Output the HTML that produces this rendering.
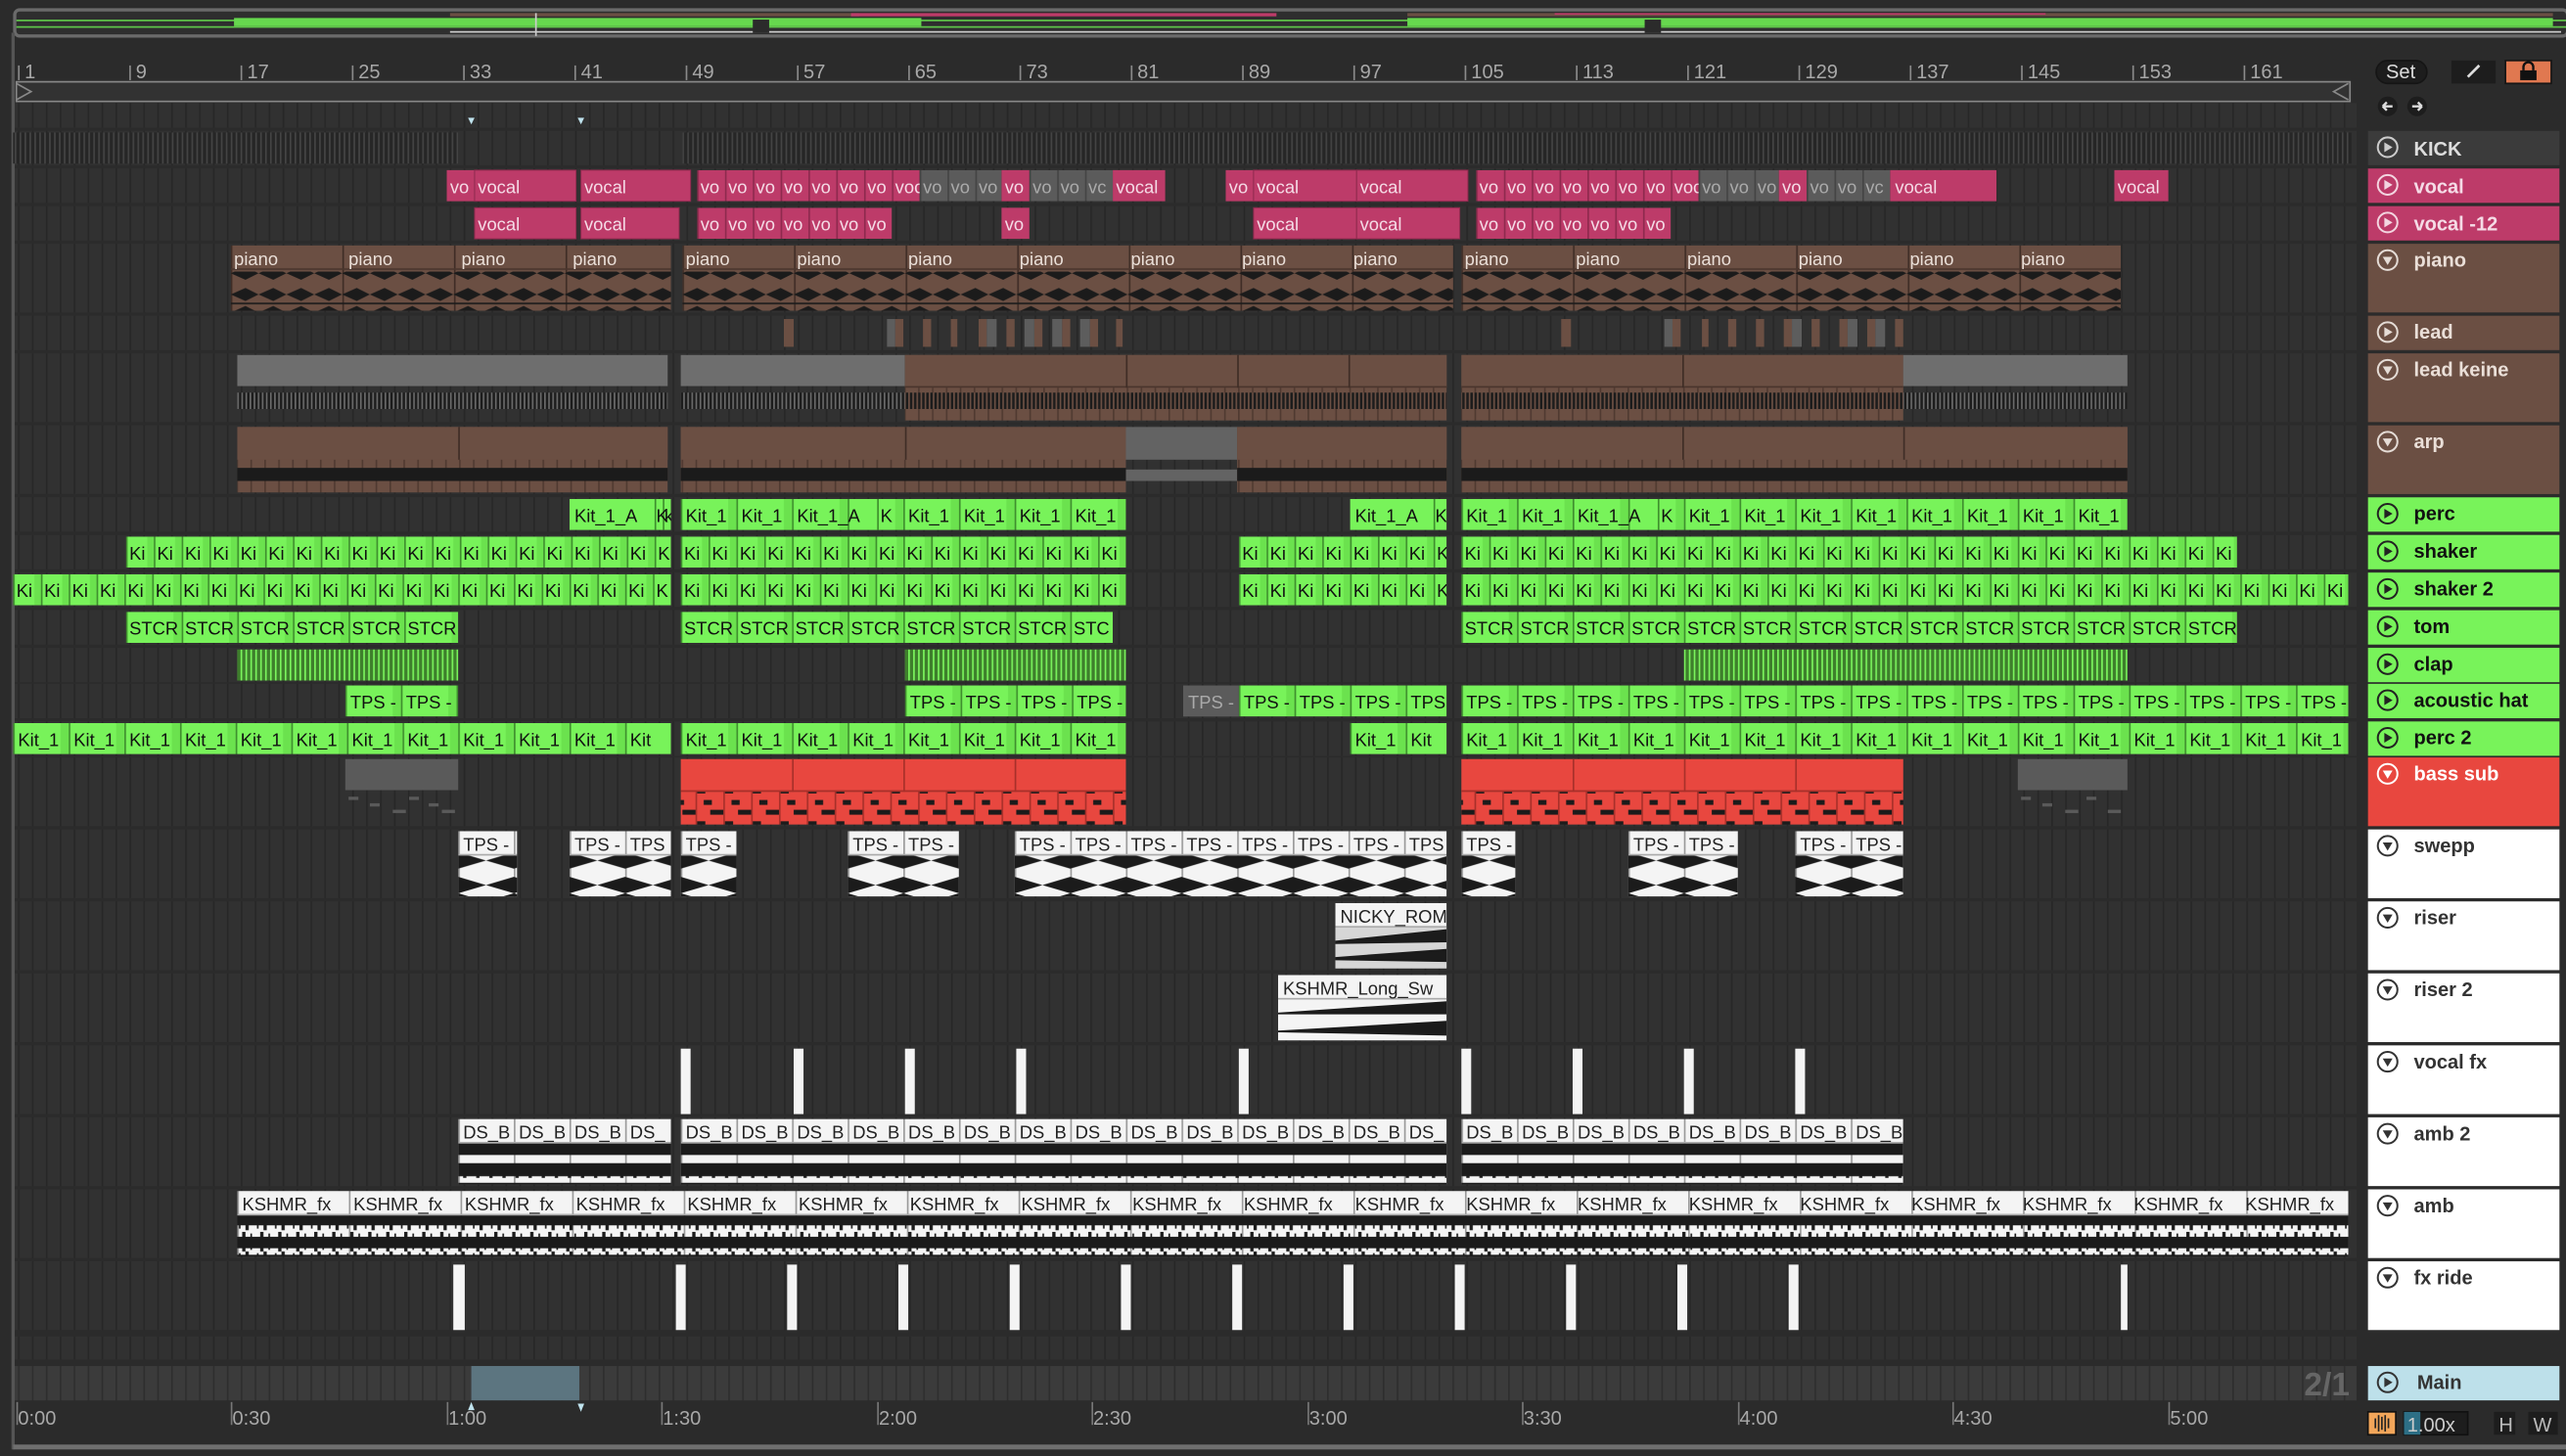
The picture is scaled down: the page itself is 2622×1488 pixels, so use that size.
<!DOCTYPE html>
<html><head><meta charset="utf-8">
<style>
html,body{margin:0;padding:0;background:#2a2a2a;width:2622px;height:1488px;overflow:hidden}
svg{display:block}
text{font-family:"Liberation Sans",sans-serif}
.cl{font-size:11px;fill:#111}
.pk{font-size:11px;fill:#f5dbe6}
.wt{font-size:11px;fill:#222}
.br{font-size:11px;fill:#eadfd8}
.hd{font-size:12px;font-weight:bold}
.rl{font-size:12px;fill:#a8a8a8}
</style></head><body>
<svg width="2622" height="1488" viewBox="0 0 1568 890" preserveAspectRatio="none" xmlns="http://www.w3.org/2000/svg">
<defs>
<pattern id="grid" x="11" y="0" width="8.51" height="10" patternUnits="userSpaceOnUse"><rect width="8.51" height="10" fill="#313131"/><rect width="1" height="10" fill="#272727"/></pattern>
<pattern id="gridM" x="11" y="0" width="8.51" height="10" patternUnits="userSpaceOnUse"><rect width="8.51" height="10" fill="#3b3b3b"/><rect width="1" height="10" fill="#2e2e2e"/></pattern>
<pattern id="g17" width="17" height="19" patternUnits="userSpaceOnUse"><rect width="17" height="19" fill="#78f35a"/><rect x="13" width="4" height="19" fill="#6be24e"/><rect width="1" height="19" fill="#3f8f2e"/></pattern>
<pattern id="g34" width="34" height="19" patternUnits="userSpaceOnUse"><rect width="34" height="19" fill="#78f35a"/><rect x="29" width="5" height="19" fill="#6be24e"/><rect width="1" height="19" fill="#3f8f2e"/></pattern>
<pattern id="gst" width="3" height="19" patternUnits="userSpaceOnUse"><rect width="3" height="19" fill="#3e7f2c"/><rect width="1" height="19" fill="#7af35c"/></pattern>
<pattern id="v17" width="17" height="19" patternUnits="userSpaceOnUse"><rect width="17" height="19" fill="#bd3b69"/><rect width="1" height="19" fill="#8e2a4e"/></pattern>
<pattern id="gr17" width="17" height="19" patternUnits="userSpaceOnUse"><rect width="17" height="19" fill="#5b5b5b"/><rect width="1" height="19" fill="#444"/></pattern>
<pattern id="pi68" width="68.2" height="40" patternUnits="userSpaceOnUse"><rect width="68.2" height="40" fill="#6b4f43"/><rect width="1" height="40" fill="#3f2d26"/><rect y="14" width="68.2" height="1" fill="#4a352d"/></pattern>
<pattern id="wv" width="17" height="24" patternUnits="userSpaceOnUse"><polygon points="0,6 9,2 17,6 9,10" fill="#1b1b1b"/><polygon points="0,17 9,13 17,17 9,21" fill="#1b1b1b"/><rect y="11" width="17" height="1" fill="#1b1b1b"/></pattern>
<pattern id="ks" width="3" height="20" patternUnits="userSpaceOnUse"><rect width="3" height="20" fill="#262626"/><rect width="1" height="20" fill="#444"/></pattern>
<pattern id="ks2" width="2.5" height="10" patternUnits="userSpaceOnUse"><rect width="2.5" height="10" fill="#1c1c1c"/><rect width="1" height="10" fill="#6a6a6a"/></pattern>
<pattern id="ks3" width="2.5" height="10" patternUnits="userSpaceOnUse"><rect width="2.5" height="10" fill="#1c1c1c"/><rect width="1" height="10" fill="#6b4f43"/></pattern>
<pattern id="w34" width="34" height="40" patternUnits="userSpaceOnUse"><rect width="34" height="40" fill="#f4f4f4"/><rect width="1" height="40" fill="#9a9a9a"/><rect y="14" width="34" height="1" fill="#aaa"/></pattern>
<pattern id="w68" width="68.2" height="40" patternUnits="userSpaceOnUse"><rect width="68.2" height="40" fill="#f4f4f4"/><rect width="1" height="40" fill="#9a9a9a"/><rect y="14" width="68.2" height="1" fill="#aaa"/></pattern>
<pattern id="bow" width="34" height="25" patternUnits="userSpaceOnUse"><polygon points="0,3 17,8 34,3 34,13 17,8 0,13" fill="#1b1b1b"/><polygon points="0,14 17,19 34,14 34,24 17,19 0,24" fill="#1b1b1b" opacity="0"/><polygon points="0,13 17,18 0,23" fill="#1b1b1b"/><polygon points="34,13 17,18 34,23" fill="#1b1b1b"/></pattern>
<pattern id="noise" width="11" height="25" patternUnits="userSpaceOnUse"><rect y="3" width="11" height="7" fill="#1b1b1b"/><rect x="3" y="0" width="2" height="12" fill="#1b1b1b"/><rect x="8" y="1" width="1" height="10" fill="#1b1b1b"/><rect y="14" width="11" height="7" fill="#1b1b1b"/><rect x="5" y="12" width="2" height="12" fill="#1b1b1b"/><rect x="1" y="13" width="1" height="10" fill="#1b1b1b"/></pattern>
<pattern id="noise2" width="8" height="25" patternUnits="userSpaceOnUse"><rect y="2" width="8" height="8" fill="#1b1b1b"/><rect y="14" width="8" height="8" fill="#1b1b1b"/><rect x="3" y="9" width="2" height="2" fill="#1b1b1b"/></pattern>
<pattern id="bass" width="17" height="20" patternUnits="userSpaceOnUse"><rect width="17" height="20" fill="#e8473f"/><rect width="1" height="20" fill="#a8302a"/><rect x="1" y="2" width="5" height="3" fill="#1b1b1b"/><rect x="5" y="9" width="5" height="3" fill="#1b1b1b"/><rect x="9" y="15" width="8" height="3" fill="#1b1b1b"/></pattern>
<pattern id="pb" width="8.5" height="20" patternUnits="userSpaceOnUse"><rect width="8.5" height="20" fill="#6b4f43"/><rect width="1" height="20" fill="#503a31"/></pattern>
</defs>

<rect width="1568" height="890" fill="#2b2b2b"/>
<rect x="9" y="6" width="1560" height="16" rx="3" fill="#2e2e2e" stroke="#6a6a6a" stroke-width="2"/>
<rect x="10" y="12" width="1558" height="1" fill="#5fc84a"/>
<rect x="10" y="16" width="1558" height="1" fill="#5fc84a"/>
<rect x="143" y="11" width="420" height="5" fill="#66d84e"/>
<rect x="275" y="8" width="250" height="2" fill="#6b4f43"/>
<rect x="520" y="8" width="260" height="2" fill="#bd3b69"/>
<rect x="860" y="11" width="700" height="5" fill="#66d84e"/>
<rect x="860" y="8" width="700" height="2" fill="#6b4f43"/>
<rect x="950" y="8" width="300" height="1" fill="#bd3b69"/>
<rect x="275" y="19" width="1290" height="1" fill="#cfcfcf"/>
<rect x="327" y="8" width="1" height="14" fill="#ccc"/>
<rect x="460" y="12" width="10" height="8" fill="#2b2b2b"/>
<rect x="1005" y="12" width="10" height="8" fill="#2b2b2b"/>
<g class="rl">
<text x="15" y="48">1</text><text x="83" y="48">9</text><text x="151" y="48">17</text><text x="219" y="48">25</text><text x="287" y="48">33</text><text x="355" y="48">41</text><text x="423" y="48">49</text><text x="491" y="48">57</text><text x="559" y="48">65</text><text x="627" y="48">73</text><text x="695" y="48">81</text><text x="763" y="48">89</text><text x="831" y="48">97</text><text x="899" y="48">105</text><text x="967" y="48">113</text><text x="1035" y="48">121</text><text x="1103" y="48">129</text><text x="1171" y="48">137</text><text x="1239" y="48">145</text><text x="1307" y="48">153</text><text x="1375" y="48">161</text>
</g>
<g fill="#8a8a8a">
<rect x="11" y="40" width="1" height="9"/><rect x="79" y="40" width="1" height="9"/><rect x="147" y="40" width="1" height="9"/><rect x="215" y="40" width="1" height="9"/><rect x="283" y="40" width="1" height="9"/><rect x="351" y="40" width="1" height="9"/><rect x="419" y="40" width="1" height="9"/><rect x="487" y="40" width="1" height="9"/><rect x="555" y="40" width="1" height="9"/><rect x="623" y="40" width="1" height="9"/><rect x="691" y="40" width="1" height="9"/><rect x="759" y="40" width="1" height="9"/><rect x="827" y="40" width="1" height="9"/><rect x="895" y="40" width="1" height="9"/><rect x="963" y="40" width="1" height="9"/><rect x="1031" y="40" width="1" height="9"/><rect x="1099" y="40" width="1" height="9"/><rect x="1167" y="40" width="1" height="9"/><rect x="1235" y="40" width="1" height="9"/><rect x="1303" y="40" width="1" height="9"/><rect x="1371" y="40" width="1" height="9"/>
</g>
<rect x="10" y="50" width="1426" height="12" fill="#323232" stroke="#888" stroke-width="1"/>
<polyline points="10,51 19,56 10,61" fill="none" stroke="#888"/>
<polyline points="1435,51 1426,56 1435,61" fill="none" stroke="#888"/>
<rect x="8" y="63" width="1432" height="15" fill="url(#grid)"/>
<polygon points="286,72 290,72 288,76" fill="#bfe3ee"/>
<polygon points="353,72 357,72 355,76" fill="#bfe3ee"/>
<rect x="1452" y="37" width="31" height="14" rx="7" fill="#1d1d1d" stroke="#151515"/>
<text x="1458" y="48" style="font-size:12px;fill:#ddd">Set</text>
<rect x="1498" y="37" width="27" height="14" fill="#1d1d1d"/>
<line x1="1508" y1="47" x2="1515" y2="40" stroke="#ddd" stroke-width="1.6"/>
<rect x="1531" y="37" width="28" height="14" fill="#e07850" stroke="#151515"/>
<rect x="1540" y="43" width="10" height="6" fill="#111"/>
<path d="M1542,43 v-2 a3,3 0 0 1 6,0 v2" fill="none" stroke="#111" stroke-width="1.4"/>
<circle cx="1459" cy="65" r="6" fill="#1d1d1d"/><path d="M1456,65 h6 M1456,65 l2.5,-2.5 M1456,65 l2.5,2.5" stroke="#ddd" stroke-width="1.4" fill="none"/>
<circle cx="1477" cy="65" r="6" fill="#1d1d1d"/><path d="M1480,65 h-6 M1480,65 l-2.5,-2.5 M1480,65 l-2.5,2.5" stroke="#ddd" stroke-width="1.4" fill="none"/>

<g fill="url(#grid)">
<rect x="8" y="80" width="1432" height="21"/><rect x="8" y="103" width="1432" height="21"/><rect x="8" y="126" width="1432" height="21"/><rect x="8" y="149" width="1432" height="42"/><rect x="8" y="193" width="1432" height="21"/><rect x="8" y="216" width="1432" height="42"/><rect x="8" y="260" width="1432" height="42"/><rect x="8" y="304" width="1432" height="21"/><rect x="8" y="327" width="1432" height="21"/><rect x="8" y="350" width="1432" height="21"/><rect x="8" y="373" width="1432" height="21"/><rect x="8" y="396" width="1432" height="21"/><rect x="8" y="418" width="1432" height="21"/><rect x="8" y="441" width="1432" height="21"/><rect x="8" y="463" width="1432" height="42"/><rect x="8" y="507" width="1432" height="42"/><rect x="8" y="551" width="1432" height="42"/><rect x="8" y="595" width="1432" height="42"/><rect x="8" y="639" width="1432" height="42"/><rect x="8" y="683" width="1432" height="42"/><rect x="8" y="727" width="1432" height="42"/><rect x="8" y="771" width="1432" height="42"/><rect x="8" y="817" width="1432" height="14"/>
</g>
<rect x="8" y="835" width="1432" height="21" fill="url(#gridM)"/>
<rect x="288" y="835" width="66" height="21" fill="#5c7580"/>
<text x="1408" y="853" style="font-size:20px;font-weight:bold;fill:#666">2/1</text>
<rect x="7" y="20" width="2" height="866" fill="#555"/>

<rect x="8" y="81" width="272" height="19" fill="url(#ks)"/>
<rect x="417" y="81" width="1020" height="19" fill="url(#ks)"/>

<rect x="273" y="104" width="17" height="19" fill="#bd3b69"/><text class="pk" x="275" y="118">vo</text>
<rect x="290" y="104" width="62" height="19" fill="#bd3b69" stroke="#8e2a4e" stroke-width="0.6"/><text class="pk" x="292" y="118">vocal</text>
<rect x="355" y="104" width="67" height="19" fill="#bd3b69" stroke="#8e2a4e" stroke-width="0.6"/><text class="pk" x="357" y="118">vocal</text>
<svg x="426" y="104" width="136" height="19"><rect width="100%" height="19" fill="url(#v17)"/><text class="pk" y="14"><tspan x="2">vo</tspan><tspan x="19">vo</tspan><tspan x="36">vo</tspan><tspan x="53">vo</tspan><tspan x="70">vo</tspan><tspan x="87">vo</tspan><tspan x="104">vo</tspan><tspan x="121">voc</tspan></text></svg>
<svg x="562" y="104" width="50" height="19"><rect width="100%" height="19" fill="url(#gr17)"/><text class="pk" y="14" style="fill:#aaa"><tspan x="2">vo</tspan><tspan x="19">vo</tspan><tspan x="36">vo</tspan></text></svg>
<rect x="612" y="104" width="17" height="19" fill="#bd3b69"/><text class="pk" x="614" y="118">vo</text>
<svg x="629" y="104" width="51" height="19"><rect width="100%" height="19" fill="url(#gr17)"/><text class="pk" y="14" style="fill:#aaa"><tspan x="2">vo</tspan><tspan x="19">vo</tspan><tspan x="36">vc</tspan></text></svg>
<rect x="680" y="104" width="32" height="19" fill="#bd3b69"/><text class="pk" x="682" y="118">vocal</text>
<rect x="749" y="104" width="17" height="19" fill="#bd3b69"/><text class="pk" x="751" y="118">vo</text>
<rect x="766" y="104" width="63" height="19" fill="#bd3b69" stroke="#8e2a4e" stroke-width="0.6"/><text class="pk" x="768" y="118">vocal</text>
<rect x="829" y="104" width="68" height="19" fill="#bd3b69" stroke="#8e2a4e" stroke-width="0.6"/><text class="pk" x="831" y="118">vocal</text>
<svg x="902" y="104" width="136" height="19"><rect width="100%" height="19" fill="url(#v17)"/><text class="pk" y="14"><tspan x="2">vo</tspan><tspan x="19">vo</tspan><tspan x="36">vo</tspan><tspan x="53">vo</tspan><tspan x="70">vo</tspan><tspan x="87">vo</tspan><tspan x="104">vo</tspan><tspan x="121">voc</tspan></text></svg>
<svg x="1038" y="104" width="49" height="19"><rect width="100%" height="19" fill="url(#gr17)"/><text class="pk" y="14" style="fill:#aaa"><tspan x="2">vo</tspan><tspan x="19">vo</tspan><tspan x="36">vo</tspan></text></svg>
<rect x="1087" y="104" width="17" height="19" fill="#bd3b69"/><text class="pk" x="1089" y="118">vo</text>
<svg x="1104" y="104" width="51" height="19"><rect width="100%" height="19" fill="url(#gr17)"/><text class="pk" y="14" style="fill:#aaa"><tspan x="2">vo</tspan><tspan x="19">vo</tspan><tspan x="36">vc</tspan></text></svg>
<rect x="1155" y="104" width="65" height="19" fill="#bd3b69"/><text class="pk" x="1158" y="118">vocal</text>
<rect x="1292" y="104" width="33" height="19" fill="#bd3b69"/><text class="pk" x="1294" y="118">vocal</text>
<rect x="290" y="127" width="62" height="19" fill="#bd3b69" stroke="#8e2a4e" stroke-width="0.6"/><text class="pk" x="292" y="141">vocal</text>
<rect x="355" y="127" width="60" height="19" fill="#bd3b69" stroke="#8e2a4e" stroke-width="0.6"/><text class="pk" x="357" y="141">vocal</text>
<svg x="426" y="127" width="119" height="19"><rect width="100%" height="19" fill="url(#v17)"/><text class="pk" y="14"><tspan x="2">vo</tspan><tspan x="19">vo</tspan><tspan x="36">vo</tspan><tspan x="53">vo</tspan><tspan x="70">vo</tspan><tspan x="87">vo</tspan><tspan x="104">vo</tspan></text></svg>
<rect x="612" y="127" width="17" height="19" fill="#bd3b69"/><text class="pk" x="614" y="141">vo</text>
<rect x="766" y="127" width="63" height="19" fill="#bd3b69" stroke="#8e2a4e" stroke-width="0.6"/><text class="pk" x="768" y="141">vocal</text>
<rect x="829" y="127" width="63" height="19" fill="#bd3b69" stroke="#8e2a4e" stroke-width="0.6"/><text class="pk" x="831" y="141">vocal</text>
<svg x="902" y="127" width="119" height="19"><rect width="100%" height="19" fill="url(#v17)"/><text class="pk" y="14"><tspan x="2">vo</tspan><tspan x="19">vo</tspan><tspan x="36">vo</tspan><tspan x="53">vo</tspan><tspan x="70">vo</tspan><tspan x="87">vo</tspan><tspan x="104">vo</tspan></text></svg>

<svg x="141" y="150" width="269" height="40"><rect width="100%" height="40" fill="url(#pi68)"/><rect y="16" width="100%" height="24" fill="url(#wv)"/><text class="br" y="12"><tspan x="2">piano</tspan><tspan x="72">piano</tspan><tspan x="141">piano</tspan><tspan x="209">piano</tspan></text></svg>
<svg x="417" y="150" width="471" height="40"><rect width="100%" height="40" fill="url(#pi68)"/><rect y="16" width="100%" height="24" fill="url(#wv)"/><text class="br" y="12"><tspan x="2">piano</tspan><tspan x="70">piano</tspan><tspan x="138">piano</tspan><tspan x="206">piano</tspan><tspan x="274">piano</tspan><tspan x="342">piano</tspan><tspan x="410">piano</tspan></text></svg>
<svg x="893" y="150" width="403" height="40"><rect width="100%" height="40" fill="url(#pi68)"/><rect y="16" width="100%" height="24" fill="url(#wv)"/><text class="br" y="12"><tspan x="2">piano</tspan><tspan x="70">piano</tspan><tspan x="138">piano</tspan><tspan x="206">piano</tspan><tspan x="274">piano</tspan><tspan x="342">piano</tspan></text></svg>

<g fill="#6b4f43">
<rect x="479" y="195" width="6" height="17"/><rect x="547" y="195" width="5" height="17"/><rect x="564" y="195" width="5" height="17"/><rect x="581" y="195" width="4" height="17"/><rect x="598" y="195" width="5" height="17"/><rect x="615" y="195" width="5" height="17"/><rect x="632" y="195" width="5" height="17"/><rect x="649" y="195" width="5" height="17"/><rect x="666" y="195" width="5" height="17"/><rect x="682" y="195" width="4" height="17"/>
<rect x="954" y="195" width="6" height="17"/><rect x="1022" y="195" width="5" height="17"/><rect x="1040" y="195" width="4" height="17"/><rect x="1056" y="195" width="5" height="17"/><rect x="1073" y="195" width="5" height="17"/><rect x="1090" y="195" width="5" height="17"/><rect x="1107" y="195" width="5" height="17"/><rect x="1124" y="195" width="5" height="17"/><rect x="1141" y="195" width="5" height="17"/><rect x="1158" y="195" width="5" height="17"/>
</g>
<g fill="#5d5d5d"><rect x="542" y="195" width="5" height="17"/><rect x="603" y="195" width="6" height="17"/><rect x="626" y="195" width="6" height="17"/><rect x="643" y="195" width="6" height="17"/><rect x="660" y="195" width="6" height="17"/><rect x="1017" y="195" width="5" height="17"/><rect x="1095" y="195" width="6" height="17"/><rect x="1129" y="195" width="6" height="17"/><rect x="1146" y="195" width="6" height="17"/></g>

<rect x="145" y="217" width="263" height="19" fill="#6e6e6e"/><rect x="145" y="240" width="263" height="10" fill="url(#ks2)"/>
<rect x="416" y="217" width="137" height="19" fill="#6e6e6e"/><rect x="416" y="240" width="137" height="10" fill="url(#ks2)"/>
<rect x="553" y="217" width="331" height="40" fill="url(#pb)"/><rect x="553" y="217" width="331" height="20" fill="#6b4f43"/><rect x="553" y="236" width="331" height="1" fill="#4a352d"/><rect x="553" y="240" width="331" height="10" fill="url(#ks3)"/>
<rect x="893" y="217" width="270" height="40" fill="url(#pb)"/><rect x="893" y="217" width="270" height="20" fill="#6b4f43"/><rect x="893" y="236" width="270" height="1" fill="#4a352d"/><rect x="893" y="240" width="270" height="10" fill="url(#ks3)"/>
<rect x="1163" y="217" width="137" height="19" fill="#6e6e6e"/><rect x="1163" y="240" width="137" height="10" fill="url(#ks2)"/>
<g fill="#3f2d26"><rect x="688" y="217" width="1" height="20"/><rect x="756" y="217" width="1" height="20"/><rect x="824" y="217" width="1" height="20"/><rect x="1028" y="217" width="1" height="20"/></g>

<rect x="145" y="261" width="263" height="40" fill="url(#pb)"/><rect x="145" y="261" width="263" height="20" fill="#6b4f43"/>
<rect x="416" y="261" width="272" height="40" fill="url(#pb)"/><rect x="416" y="261" width="272" height="20" fill="#6b4f43"/>
<rect x="688" y="261" width="68" height="20" fill="#636363"/><rect x="688" y="287" width="68" height="7" fill="#636363"/>
<rect x="756" y="261" width="128" height="40" fill="url(#pb)"/><rect x="756" y="261" width="128" height="20" fill="#6b4f43"/>
<rect x="893" y="261" width="407" height="40" fill="url(#pb)"/><rect x="893" y="261" width="407" height="20" fill="#6b4f43"/>
<g fill="#1b1b1b"><rect x="145" y="286" width="263" height="8"/><rect x="416" y="286" width="272" height="8"/><rect x="756" y="286" width="128" height="8"/><rect x="893" y="286" width="407" height="8"/></g>
<g fill="#3f2d26"><rect x="280" y="261" width="1" height="20"/><rect x="553" y="261" width="1" height="20"/><rect x="1028" y="261" width="1" height="20"/><rect x="1163" y="261" width="1" height="20"/></g>

<svg x="348" y="305" width="62" height="19"><rect width="100%" height="19" fill="#78f35a"/><rect x="52" width="1" height="19" fill="#3f8f2e"/><rect x="57" width="1" height="19" fill="#3f8f2e"/><text class="cl" y="14"><tspan x="3">Kit_1_A</tspan><tspan x="53">K</tspan><tspan x="58">k</tspan></text></svg>
<svg x="416" y="305" width="272" height="19"><rect width="100%" height="19" fill="url(#g34)"/><rect x="120" width="1" height="19" fill="#3f8f2e"/><text class="cl" y="14"><tspan x="3">Kit_1</tspan><tspan x="37">Kit_1</tspan><tspan x="71">Kit_1_A</tspan><tspan x="122">K</tspan><tspan x="139">Kit_1</tspan><tspan x="173">Kit_1</tspan><tspan x="207">Kit_1</tspan><tspan x="241">Kit_1</tspan></text></svg>
<svg x="825" y="305" width="59" height="19"><rect width="100%" height="19" fill="#78f35a"/><rect x="51" width="1" height="19" fill="#3f8f2e"/><text class="cl" y="14"><tspan x="3">Kit_1_A</tspan><tspan x="52">K</tspan></text></svg>
<svg x="893" y="305" width="407" height="19"><rect width="100%" height="19" fill="url(#g34)"/><rect x="120" width="1" height="19" fill="#3f8f2e"/><text class="cl" y="14"><tspan x="3">Kit_1</tspan><tspan x="37">Kit_1</tspan><tspan x="71">Kit_1_A</tspan><tspan x="122">K</tspan><tspan x="139">Kit_1</tspan><tspan x="173">Kit_1</tspan><tspan x="207">Kit_1</tspan><tspan x="241">Kit_1</tspan><tspan x="275">Kit_1</tspan><tspan x="309">Kit_1</tspan><tspan x="343">Kit_1</tspan><tspan x="377">Kit_1</tspan></text></svg>

<svg x="77" y="328" width="333" height="19"><rect width="100%" height="19" fill="url(#g17)"/><text class="cl" y="14"><tspan x="2">Ki</tspan><tspan x="19">Ki</tspan><tspan x="36">Ki</tspan><tspan x="53">Ki</tspan><tspan x="70">Ki</tspan><tspan x="87">Ki</tspan><tspan x="104">Ki</tspan><tspan x="121">Ki</tspan><tspan x="138">Ki</tspan><tspan x="155">Ki</tspan><tspan x="172">Ki</tspan><tspan x="189">Ki</tspan><tspan x="206">Ki</tspan><tspan x="223">Ki</tspan><tspan x="240">Ki</tspan><tspan x="257">Ki</tspan><tspan x="274">Ki</tspan><tspan x="291">Ki</tspan><tspan x="308">Ki</tspan><tspan x="325">K</tspan></text></svg>
<svg x="416" y="328" width="272" height="19"><rect width="100%" height="19" fill="url(#g17)"/><text class="cl" y="14"><tspan x="2">Ki</tspan><tspan x="19">Ki</tspan><tspan x="36">Ki</tspan><tspan x="53">Ki</tspan><tspan x="70">Ki</tspan><tspan x="87">Ki</tspan><tspan x="104">Ki</tspan><tspan x="121">Ki</tspan><tspan x="138">Ki</tspan><tspan x="155">Ki</tspan><tspan x="172">Ki</tspan><tspan x="189">Ki</tspan><tspan x="206">Ki</tspan><tspan x="223">Ki</tspan><tspan x="240">Ki</tspan><tspan x="257">Ki</tspan></text></svg>
<svg x="757" y="328" width="127" height="19"><rect width="100%" height="19" fill="url(#g17)"/><text class="cl" y="14"><tspan x="2">Ki</tspan><tspan x="19">Ki</tspan><tspan x="36">Ki</tspan><tspan x="53">Ki</tspan><tspan x="70">Ki</tspan><tspan x="87">Ki</tspan><tspan x="104">Ki</tspan><tspan x="121">K</tspan></text></svg>
<svg x="893" y="328" width="474" height="19"><rect width="100%" height="19" fill="url(#g17)"/><text class="cl" y="14"><tspan x="2">Ki</tspan><tspan x="19">Ki</tspan><tspan x="36">Ki</tspan><tspan x="53">Ki</tspan><tspan x="70">Ki</tspan><tspan x="87">Ki</tspan><tspan x="104">Ki</tspan><tspan x="121">Ki</tspan><tspan x="138">Ki</tspan><tspan x="155">Ki</tspan><tspan x="172">Ki</tspan><tspan x="189">Ki</tspan><tspan x="206">Ki</tspan><tspan x="223">Ki</tspan><tspan x="240">Ki</tspan><tspan x="257">Ki</tspan><tspan x="274">Ki</tspan><tspan x="291">Ki</tspan><tspan x="308">Ki</tspan><tspan x="325">Ki</tspan><tspan x="342">Ki</tspan><tspan x="359">Ki</tspan><tspan x="376">Ki</tspan><tspan x="393">Ki</tspan><tspan x="410">Ki</tspan><tspan x="427">Ki</tspan><tspan x="444">Ki</tspan><tspan x="461">Ki</tspan></text></svg>
<svg x="8" y="351" width="402" height="19"><rect width="100%" height="19" fill="url(#g17)"/><text class="cl" y="14"><tspan x="2">Ki</tspan><tspan x="19">Ki</tspan><tspan x="36">Ki</tspan><tspan x="53">Ki</tspan><tspan x="70">Ki</tspan><tspan x="87">Ki</tspan><tspan x="104">Ki</tspan><tspan x="121">Ki</tspan><tspan x="138">Ki</tspan><tspan x="155">Ki</tspan><tspan x="172">Ki</tspan><tspan x="189">Ki</tspan><tspan x="206">Ki</tspan><tspan x="223">Ki</tspan><tspan x="240">Ki</tspan><tspan x="257">Ki</tspan><tspan x="274">Ki</tspan><tspan x="291">Ki</tspan><tspan x="308">Ki</tspan><tspan x="325">Ki</tspan><tspan x="342">Ki</tspan><tspan x="359">Ki</tspan><tspan x="376">Ki</tspan><tspan x="393">K</tspan></text></svg>
<svg x="416" y="351" width="272" height="19"><rect width="100%" height="19" fill="url(#g17)"/><text class="cl" y="14"><tspan x="2">Ki</tspan><tspan x="19">Ki</tspan><tspan x="36">Ki</tspan><tspan x="53">Ki</tspan><tspan x="70">Ki</tspan><tspan x="87">Ki</tspan><tspan x="104">Ki</tspan><tspan x="121">Ki</tspan><tspan x="138">Ki</tspan><tspan x="155">Ki</tspan><tspan x="172">Ki</tspan><tspan x="189">Ki</tspan><tspan x="206">Ki</tspan><tspan x="223">Ki</tspan><tspan x="240">Ki</tspan><tspan x="257">Ki</tspan></text></svg>
<svg x="757" y="351" width="127" height="19"><rect width="100%" height="19" fill="url(#g17)"/><text class="cl" y="14"><tspan x="2">Ki</tspan><tspan x="19">Ki</tspan><tspan x="36">Ki</tspan><tspan x="53">Ki</tspan><tspan x="70">Ki</tspan><tspan x="87">Ki</tspan><tspan x="104">Ki</tspan><tspan x="121">K</tspan></text></svg>
<svg x="893" y="351" width="542" height="19"><rect width="100%" height="19" fill="url(#g17)"/><text class="cl" y="14"><tspan x="2">Ki</tspan><tspan x="19">Ki</tspan><tspan x="36">Ki</tspan><tspan x="53">Ki</tspan><tspan x="70">Ki</tspan><tspan x="87">Ki</tspan><tspan x="104">Ki</tspan><tspan x="121">Ki</tspan><tspan x="138">Ki</tspan><tspan x="155">Ki</tspan><tspan x="172">Ki</tspan><tspan x="189">Ki</tspan><tspan x="206">Ki</tspan><tspan x="223">Ki</tspan><tspan x="240">Ki</tspan><tspan x="257">Ki</tspan><tspan x="274">Ki</tspan><tspan x="291">Ki</tspan><tspan x="308">Ki</tspan><tspan x="325">Ki</tspan><tspan x="342">Ki</tspan><tspan x="359">Ki</tspan><tspan x="376">Ki</tspan><tspan x="393">Ki</tspan><tspan x="410">Ki</tspan><tspan x="427">Ki</tspan><tspan x="444">Ki</tspan><tspan x="461">Ki</tspan><tspan x="478">Ki</tspan><tspan x="495">Ki</tspan><tspan x="512">Ki</tspan><tspan x="529">Ki</tspan></text></svg>
<svg x="77" y="374" width="203" height="19"><rect width="100%" height="19" fill="url(#g34)"/><text class="cl" y="14"><tspan x="2">STCR</tspan><tspan x="36">STCR</tspan><tspan x="70">STCR</tspan><tspan x="104">STCR</tspan><tspan x="138">STCR</tspan><tspan x="172">STCR</tspan></text></svg>
<svg x="416" y="374" width="264" height="19"><rect width="100%" height="19" fill="url(#g34)"/><text class="cl" y="14"><tspan x="2">STCR</tspan><tspan x="36">STCR</tspan><tspan x="70">STCR</tspan><tspan x="104">STCR</tspan><tspan x="138">STCR</tspan><tspan x="172">STCR</tspan><tspan x="206">STCR</tspan><tspan x="240">STC</tspan></text></svg>
<svg x="893" y="374" width="474" height="19"><rect width="100%" height="19" fill="url(#g34)"/><text class="cl" y="14"><tspan x="2">STCR</tspan><tspan x="36">STCR</tspan><tspan x="70">STCR</tspan><tspan x="104">STCR</tspan><tspan x="138">STCR</tspan><tspan x="172">STCR</tspan><tspan x="206">STCR</tspan><tspan x="240">STCR</tspan><tspan x="274">STCR</tspan><tspan x="308">STCR</tspan><tspan x="342">STCR</tspan><tspan x="376">STCR</tspan><tspan x="410">STCR</tspan><tspan x="444">STCR</tspan></text></svg>
<rect x="145" y="397" width="135" height="19" fill="url(#gst)"/>
<rect x="553" y="397" width="135" height="19" fill="url(#gst)"/>
<rect x="1029" y="397" width="271" height="19" fill="url(#gst)"/>
<svg x="211" y="419" width="69" height="19"><rect width="100%" height="19" fill="url(#g34)"/><text class="cl" y="14"><tspan x="3">TPS -</tspan><tspan x="37">TPS -</tspan></text></svg>
<svg x="553" y="419" width="135" height="19"><rect width="100%" height="19" fill="url(#g34)"/><text class="cl" y="14"><tspan x="3">TPS -</tspan><tspan x="37">TPS -</tspan><tspan x="71">TPS -</tspan><tspan x="105">TPS -</tspan></text></svg>
<rect x="723" y="419" width="34" height="19" fill="#5b5b5b"/><text class="cl" x="726" y="433" style="fill:#aaa">TPS -</text>
<svg x="757" y="419" width="127" height="19"><rect width="100%" height="19" fill="url(#g34)"/><text class="cl" y="14"><tspan x="3">TPS -</tspan><tspan x="37">TPS -</tspan><tspan x="71">TPS -</tspan><tspan x="105">TPS</tspan></text></svg>
<svg x="893" y="419" width="542" height="19"><rect width="100%" height="19" fill="url(#g34)"/><text class="cl" y="14"><tspan x="3">TPS -</tspan><tspan x="37">TPS -</tspan><tspan x="71">TPS -</tspan><tspan x="105">TPS -</tspan><tspan x="139">TPS -</tspan><tspan x="173">TPS -</tspan><tspan x="207">TPS -</tspan><tspan x="241">TPS -</tspan><tspan x="275">TPS -</tspan><tspan x="309">TPS -</tspan><tspan x="343">TPS -</tspan><tspan x="377">TPS -</tspan><tspan x="411">TPS -</tspan><tspan x="445">TPS -</tspan><tspan x="479">TPS -</tspan><tspan x="513">TPS -</tspan></text></svg>
<svg x="8" y="442" width="402" height="19"><rect width="100%" height="19" fill="url(#g34)"/><text class="cl" y="14"><tspan x="3">Kit_1</tspan><tspan x="37">Kit_1</tspan><tspan x="71">Kit_1</tspan><tspan x="105">Kit_1</tspan><tspan x="139">Kit_1</tspan><tspan x="173">Kit_1</tspan><tspan x="207">Kit_1</tspan><tspan x="241">Kit_1</tspan><tspan x="275">Kit_1</tspan><tspan x="309">Kit_1</tspan><tspan x="343">Kit_1</tspan><tspan x="377">Kit</tspan></text></svg>
<svg x="416" y="442" width="272" height="19"><rect width="100%" height="19" fill="url(#g34)"/><text class="cl" y="14"><tspan x="3">Kit_1</tspan><tspan x="37">Kit_1</tspan><tspan x="71">Kit_1</tspan><tspan x="105">Kit_1</tspan><tspan x="139">Kit_1</tspan><tspan x="173">Kit_1</tspan><tspan x="207">Kit_1</tspan><tspan x="241">Kit_1</tspan></text></svg>
<svg x="825" y="442" width="59" height="19"><rect width="100%" height="19" fill="url(#g34)"/><text class="cl" y="14"><tspan x="3">Kit_1</tspan><tspan x="37">Kit</tspan></text></svg>
<svg x="893" y="442" width="542" height="19"><rect width="100%" height="19" fill="url(#g34)"/><text class="cl" y="14"><tspan x="3">Kit_1</tspan><tspan x="37">Kit_1</tspan><tspan x="71">Kit_1</tspan><tspan x="105">Kit_1</tspan><tspan x="139">Kit_1</tspan><tspan x="173">Kit_1</tspan><tspan x="207">Kit_1</tspan><tspan x="241">Kit_1</tspan><tspan x="275">Kit_1</tspan><tspan x="309">Kit_1</tspan><tspan x="343">Kit_1</tspan><tspan x="377">Kit_1</tspan><tspan x="411">Kit_1</tspan><tspan x="445">Kit_1</tspan><tspan x="479">Kit_1</tspan><tspan x="513">Kit_1</tspan></text></svg>

<rect x="416" y="464" width="272" height="20" fill="#e8473f"/><rect x="416" y="484" width="272" height="20" fill="url(#bass)"/>
<rect x="893" y="464" width="270" height="20" fill="#e8473f"/><rect x="893" y="484" width="270" height="20" fill="url(#bass)"/>
<g fill="#a8302a"><rect x="484" y="464" width="1" height="20"/><rect x="552" y="464" width="1" height="20"/><rect x="620" y="464" width="1" height="20"/><rect x="961" y="464" width="1" height="20"/><rect x="1029" y="464" width="1" height="20"/><rect x="1097" y="464" width="1" height="20"/><rect x="416" y="483" width="272" height="1"/><rect x="893" y="483" width="270" height="1"/></g>
<rect x="211" y="464" width="69" height="19" fill="#5a5a5a"/>
<g fill="#5a5a5a"><rect x="213" y="487" width="6" height="2"/><rect x="226" y="491" width="6" height="2"/><rect x="240" y="495" width="8" height="2"/><rect x="250" y="487" width="6" height="2"/><rect x="262" y="491" width="6" height="2"/><rect x="270" y="495" width="8" height="2"/><rect x="1235" y="487" width="6" height="2"/><rect x="1248" y="491" width="6" height="2"/><rect x="1262" y="495" width="8" height="2"/><rect x="1275" y="487" width="6" height="2"/><rect x="1288" y="495" width="8" height="2"/></g>
<rect x="1233" y="464" width="67" height="19" fill="#5a5a5a"/>

<svg x="280" y="508" width="36" height="40"><rect width="100%" height="40" fill="url(#w34)"/><rect y="15" width="100%" height="25" fill="url(#bow)"/><text class="wt" y="12" x="3">TPS -</text></svg>
<svg x="348" y="508" width="62" height="40"><rect width="100%" height="40" fill="url(#w34)"/><rect y="15" width="100%" height="25" fill="url(#bow)"/><text class="wt" y="12"><tspan x="3">TPS -</tspan><tspan x="37">TPS</tspan></text></svg>
<svg x="416" y="508" width="34" height="40"><rect width="100%" height="40" fill="url(#w34)"/><rect y="15" width="100%" height="25" fill="url(#bow)"/><text class="wt" y="12" x="3">TPS -</text></svg>
<svg x="518" y="508" width="68" height="40"><rect width="100%" height="40" fill="url(#w34)"/><rect y="15" width="100%" height="25" fill="url(#bow)"/><text class="wt" y="12"><tspan x="3">TPS -</tspan><tspan x="37">TPS -</tspan></text></svg>
<svg x="620" y="508" width="264" height="40"><rect width="100%" height="40" fill="url(#w34)"/><rect y="15" width="100%" height="25" fill="url(#bow)"/><text class="wt" y="12"><tspan x="3">TPS -</tspan><tspan x="37">TPS -</tspan><tspan x="71">TPS -</tspan><tspan x="105">TPS -</tspan><tspan x="139">TPS -</tspan><tspan x="173">TPS -</tspan><tspan x="207">TPS -</tspan><tspan x="241">TPS</tspan></text></svg>
<svg x="893" y="508" width="33" height="40"><rect width="100%" height="40" fill="url(#w34)"/><rect y="15" width="100%" height="25" fill="url(#bow)"/><text class="wt" y="12" x="3">TPS -</text></svg>
<svg x="995" y="508" width="67" height="40"><rect width="100%" height="40" fill="url(#w34)"/><rect y="15" width="100%" height="25" fill="url(#bow)"/><text class="wt" y="12"><tspan x="3">TPS -</tspan><tspan x="37">TPS -</tspan></text></svg>
<svg x="1097" y="508" width="66" height="40"><rect width="100%" height="40" fill="url(#w34)"/><rect y="15" width="100%" height="25" fill="url(#bow)"/><text class="wt" y="12"><tspan x="3">TPS -</tspan><tspan x="37">TPS -</tspan></text></svg>
<svg x="816" y="552" width="68" height="40"><rect width="100%" height="40" fill="#f4f4f4"/><rect y="14" width="100%" height="1" fill="#aaa"/><rect y="15" width="100%" height="25" fill="#d6d6d6"/><polygon points="0,23 68,16 68,24 0,25" fill="#1b1b1b"/><polygon points="0,33 68,28 68,36 0,35" fill="#1b1b1b"/><text class="wt" y="12" x="3">NICKY_ROM</text></svg>
<svg x="781" y="596" width="103" height="40"><rect width="100%" height="40" fill="#f4f4f4"/><rect y="14" width="100%" height="1" fill="#aaa"/><polygon points="0,23 103,16 103,24 0,24" fill="#1b1b1b"/><polygon points="0,34 103,28 103,37 0,35" fill="#1b1b1b"/><text class="wt" y="12" x="3">KSHMR_Long_Sw</text></svg>
<g fill="#f4f4f4"><rect x="416" y="641" width="6" height="40"/><rect x="485" y="641" width="6" height="40"/><rect x="553" y="641" width="6" height="40"/><rect x="621" y="641" width="6" height="40"/><rect x="757" y="641" width="6" height="40"/><rect x="893" y="641" width="6" height="40"/><rect x="961" y="641" width="6" height="40"/><rect x="1029" y="641" width="6" height="40"/><rect x="1097" y="641" width="6" height="40"/></g>
<svg x="280" y="684" width="130" height="40"><rect width="100%" height="40" fill="url(#w34)"/><rect y="15" width="100%" height="25" fill="url(#noise2)"/><text class="wt" y="12"><tspan x="3">DS_B</tspan><tspan x="37">DS_B</tspan><tspan x="71">DS_B</tspan><tspan x="105">DS_</tspan></text></svg>
<svg x="416" y="684" width="468" height="40"><rect width="100%" height="40" fill="url(#w34)"/><rect y="15" width="100%" height="25" fill="url(#noise2)"/><text class="wt" y="12"><tspan x="3">DS_B</tspan><tspan x="37">DS_B</tspan><tspan x="71">DS_B</tspan><tspan x="105">DS_B</tspan><tspan x="139">DS_B</tspan><tspan x="173">DS_B</tspan><tspan x="207">DS_B</tspan><tspan x="241">DS_B</tspan><tspan x="275">DS_B</tspan><tspan x="309">DS_B</tspan><tspan x="343">DS_B</tspan><tspan x="377">DS_B</tspan><tspan x="411">DS_B</tspan><tspan x="445">DS_</tspan></text></svg>
<svg x="893" y="684" width="270" height="40"><rect width="100%" height="40" fill="url(#w34)"/><rect y="15" width="100%" height="25" fill="url(#noise2)"/><text class="wt" y="12"><tspan x="3">DS_B</tspan><tspan x="37">DS_B</tspan><tspan x="71">DS_B</tspan><tspan x="105">DS_B</tspan><tspan x="139">DS_B</tspan><tspan x="173">DS_B</tspan><tspan x="207">DS_B</tspan><tspan x="241">DS_B</tspan></text></svg>
<svg x="145" y="728" width="1290" height="40"><rect width="100%" height="40" fill="url(#w68)"/><rect y="15" width="100%" height="25" fill="url(#noise)"/><text class="wt" y="12"><tspan x="3">KSHMR_fx</tspan><tspan x="71">KSHMR_fx</tspan><tspan x="139">KSHMR_fx</tspan><tspan x="207">KSHMR_fx</tspan><tspan x="275">KSHMR_fx</tspan><tspan x="343">KSHMR_fx</tspan><tspan x="411">KSHMR_fx</tspan><tspan x="479">KSHMR_fx</tspan><tspan x="547">KSHMR_fx</tspan><tspan x="615">KSHMR_fx</tspan><tspan x="683">KSHMR_fx</tspan><tspan x="751">KSHMR_fx</tspan><tspan x="819">KSHMR_fx</tspan><tspan x="887">KSHMR_fx</tspan><tspan x="955">KSHMR_fx</tspan><tspan x="1023">KSHMR_fx</tspan><tspan x="1091">KSHMR_fx</tspan><tspan x="1159">KSHMR_fx</tspan><tspan x="1227">KSHMR_fx</tspan></text></svg>
<g fill="#f4f4f4"><rect x="277" y="773" width="7" height="40"/><rect x="413" y="773" width="6" height="40"/><rect x="481" y="773" width="6" height="40"/><rect x="549" y="773" width="6" height="40"/><rect x="617" y="773" width="6" height="40"/><rect x="685" y="773" width="6" height="40"/><rect x="753" y="773" width="6" height="40"/><rect x="821" y="773" width="6" height="40"/><rect x="889" y="773" width="6" height="40"/><rect x="957" y="773" width="6" height="40"/><rect x="1025" y="773" width="6" height="40"/><rect x="1093" y="773" width="6" height="40"/><rect x="1296" y="773" width="4" height="40"/></g>

<g>
<rect x="1447" y="80" width="117" height="21" fill="#3b3b3b"/>
<rect x="1447" y="103" width="117" height="21" fill="#bd3b69"/>
<rect x="1447" y="126" width="117" height="21" fill="#bd3b69"/>
<rect x="1447" y="149" width="117" height="42" fill="#6b4f43"/>
<rect x="1447" y="193" width="117" height="21" fill="#6b4f43"/>
<rect x="1447" y="216" width="117" height="42" fill="#6b4f43"/>
<rect x="1447" y="260" width="117" height="42" fill="#6b4f43"/>
<rect x="1447" y="304" width="117" height="21" fill="#78f35a"/>
<rect x="1447" y="327" width="117" height="21" fill="#78f35a"/>
<rect x="1447" y="350" width="117" height="21" fill="#78f35a"/>
<rect x="1447" y="373" width="117" height="21" fill="#78f35a"/>
<rect x="1447" y="396" width="117" height="21" fill="#78f35a"/>
<rect x="1447" y="418" width="117" height="21" fill="#78f35a"/>
<rect x="1447" y="441" width="117" height="21" fill="#78f35a"/>
<rect x="1447" y="463" width="117" height="42" fill="#e8473f"/>
<rect x="1447" y="507" width="117" height="42" fill="#fff"/>
<rect x="1447" y="551" width="117" height="42" fill="#fff"/>
<rect x="1447" y="595" width="117" height="42" fill="#fff"/>
<rect x="1447" y="639" width="117" height="42" fill="#fff"/>
<rect x="1447" y="683" width="117" height="42" fill="#fff"/>
<rect x="1447" y="727" width="117" height="42" fill="#fff"/>
<rect x="1447" y="771" width="117" height="42" fill="#fff"/>
<rect x="1447" y="835" width="117" height="21" fill="#bde0ea"/>
</g>
<g fill="none" stroke-width="1.2">
<circle cx="1459" cy="90" r="6" stroke="#ccc"/><circle cx="1459" cy="113" r="6" stroke="#f3d5e0"/><circle cx="1459" cy="136" r="6" stroke="#f3d5e0"/><circle cx="1459" cy="159" r="6" stroke="#e5dcd6"/><circle cx="1459" cy="203" r="6" stroke="#e5dcd6"/><circle cx="1459" cy="226" r="6" stroke="#e5dcd6"/><circle cx="1459" cy="270" r="6" stroke="#e5dcd6"/>
<circle cx="1459" cy="314" r="6" stroke="#222"/><circle cx="1459" cy="337" r="6" stroke="#222"/><circle cx="1459" cy="360" r="6" stroke="#222"/><circle cx="1459" cy="383" r="6" stroke="#222"/><circle cx="1459" cy="406" r="6" stroke="#222"/><circle cx="1459" cy="428" r="6" stroke="#222"/><circle cx="1459" cy="451" r="6" stroke="#222"/>
<circle cx="1459" cy="473" r="6" stroke="#fff"/>
<circle cx="1459" cy="517" r="6" stroke="#333"/><circle cx="1459" cy="561" r="6" stroke="#333"/><circle cx="1459" cy="605" r="6" stroke="#333"/><circle cx="1459" cy="649" r="6" stroke="#333"/><circle cx="1459" cy="693" r="6" stroke="#333"/><circle cx="1459" cy="737" r="6" stroke="#333"/><circle cx="1459" cy="781" r="6" stroke="#333"/><circle cx="1459" cy="845" r="6" stroke="#333"/>
</g>
<g>
<polygon points="1457,87 1457,93 1462,90" fill="#ccc"/>
<polygon points="1457,110 1457,116 1462,113" fill="#f3d5e0"/><polygon points="1457,133 1457,139 1462,136" fill="#f3d5e0"/>
<polygon points="1456,157 1462,157 1459,162" fill="#e5dcd6"/><polygon points="1457,200 1457,206 1462,203" fill="#e5dcd6"/><polygon points="1456,224 1462,224 1459,229" fill="#e5dcd6"/><polygon points="1456,268 1462,268 1459,273" fill="#e5dcd6"/>
<polygon points="1457,311 1457,317 1462,314" fill="#222"/><polygon points="1457,334 1457,340 1462,337" fill="#222"/><polygon points="1457,357 1457,363 1462,360" fill="#222"/><polygon points="1457,380 1457,386 1462,383" fill="#222"/><polygon points="1457,403 1457,409 1462,406" fill="#222"/><polygon points="1457,425 1457,431 1462,428" fill="#222"/><polygon points="1457,448 1457,454 1462,451" fill="#222"/>
<polygon points="1456,471 1462,471 1459,476" fill="#fff"/>
<polygon points="1456,515 1462,515 1459,520" fill="#333"/><polygon points="1456,559 1462,559 1459,564" fill="#333"/><polygon points="1456,603 1462,603 1459,608" fill="#333"/><polygon points="1456,647 1462,647 1459,652" fill="#333"/><polygon points="1456,691 1462,691 1459,696" fill="#333"/><polygon points="1456,735 1462,735 1459,740" fill="#333"/><polygon points="1456,779 1462,779 1459,784" fill="#333"/>
<polygon points="1457,842 1457,848 1462,845" fill="#333"/>
</g>
<g class="hd">
<text x="1475" y="95" fill="#ddd">KICK</text>
<text x="1475" y="118" fill="#f5dbe6">vocal</text>
<text x="1475" y="141" fill="#f5dbe6">vocal -12</text>
<text x="1475" y="163" fill="#eadfd8">piano</text>
<text x="1475" y="207" fill="#eadfd8">lead</text>
<text x="1475" y="230" fill="#eadfd8">lead keine</text>
<text x="1475" y="274" fill="#eadfd8">arp</text>
<text x="1475" y="318" fill="#111">perc</text>
<text x="1475" y="341" fill="#111">shaker</text>
<text x="1475" y="364" fill="#111">shaker 2</text>
<text x="1475" y="387" fill="#111">tom</text>
<text x="1475" y="410" fill="#111">clap</text>
<text x="1475" y="432" fill="#111">acoustic hat</text>
<text x="1475" y="455" fill="#111">perc 2</text>
<text x="1475" y="477" fill="#fff">bass sub</text>
<text x="1475" y="521" fill="#333">swepp</text>
<text x="1475" y="565" fill="#333">riser</text>
<text x="1475" y="609" fill="#333">riser 2</text>
<text x="1475" y="653" fill="#333">vocal fx</text>
<text x="1475" y="697" fill="#333">amb 2</text>
<text x="1475" y="741" fill="#333">amb</text>
<text x="1475" y="785" fill="#333">fx ride</text>
<text x="1477" y="849" fill="#333">Main</text>
</g>

<g fill="#777">
<rect x="10" y="857" width="1" height="14"/><rect x="141" y="857" width="1" height="14"/><rect x="273" y="857" width="1" height="14"/><rect x="404" y="857" width="1" height="14"/><rect x="536" y="857" width="1" height="14"/><rect x="667" y="857" width="1" height="14"/><rect x="799" y="857" width="1" height="14"/><rect x="930" y="857" width="1" height="14"/><rect x="1062" y="857" width="1" height="14"/><rect x="1193" y="857" width="1" height="14"/><rect x="1325" y="857" width="1" height="14"/>
</g>
<polygon points="286,862 290,862 288,857" fill="#bfe3ee"/><polygon points="353,858 357,858 355,863" fill="#bfe3ee"/>
<g class="rl">
<text x="11" y="871">0:00</text><text x="142" y="871">0:30</text><text x="274" y="871">1:00</text><text x="405" y="871">1:30</text><text x="537" y="871">2:00</text><text x="668" y="871">2:30</text><text x="800" y="871">3:00</text><text x="931" y="871">3:30</text><text x="1063" y="871">4:00</text><text x="1194" y="871">4:30</text><text x="1326" y="871">5:00</text>
</g>
<rect x="1447" y="863" width="17" height="14" fill="#f2a65a" stroke="#111"/>
<g fill="#222"><rect x="1451" y="867" width="1" height="6"/><rect x="1453" y="865" width="1" height="10"/><rect x="1455" y="866" width="1" height="8"/><rect x="1457" y="865" width="1" height="10"/><rect x="1459" y="867" width="1" height="6"/></g>
<rect x="1469" y="863" width="39" height="14" fill="#1d1d1d" stroke="#111"/>
<rect x="1469" y="863" width="10" height="14" fill="#2d6f86"/>
<text x="1471" y="875" style="font-size:12px;fill:#ccc">1.00x</text>
<rect x="1524" y="863" width="13" height="14" fill="#1d1d1d"/><text x="1527" y="875" style="font-size:12px;fill:#bbb">H</text>
<rect x="1545" y="863" width="18" height="14" fill="#1d1d1d"/><text x="1548" y="875" style="font-size:12px;fill:#bbb">W</text>
<rect x="8" y="883" width="1560" height="3" fill="#6f6f6f"/>
</svg>
</body></html>
